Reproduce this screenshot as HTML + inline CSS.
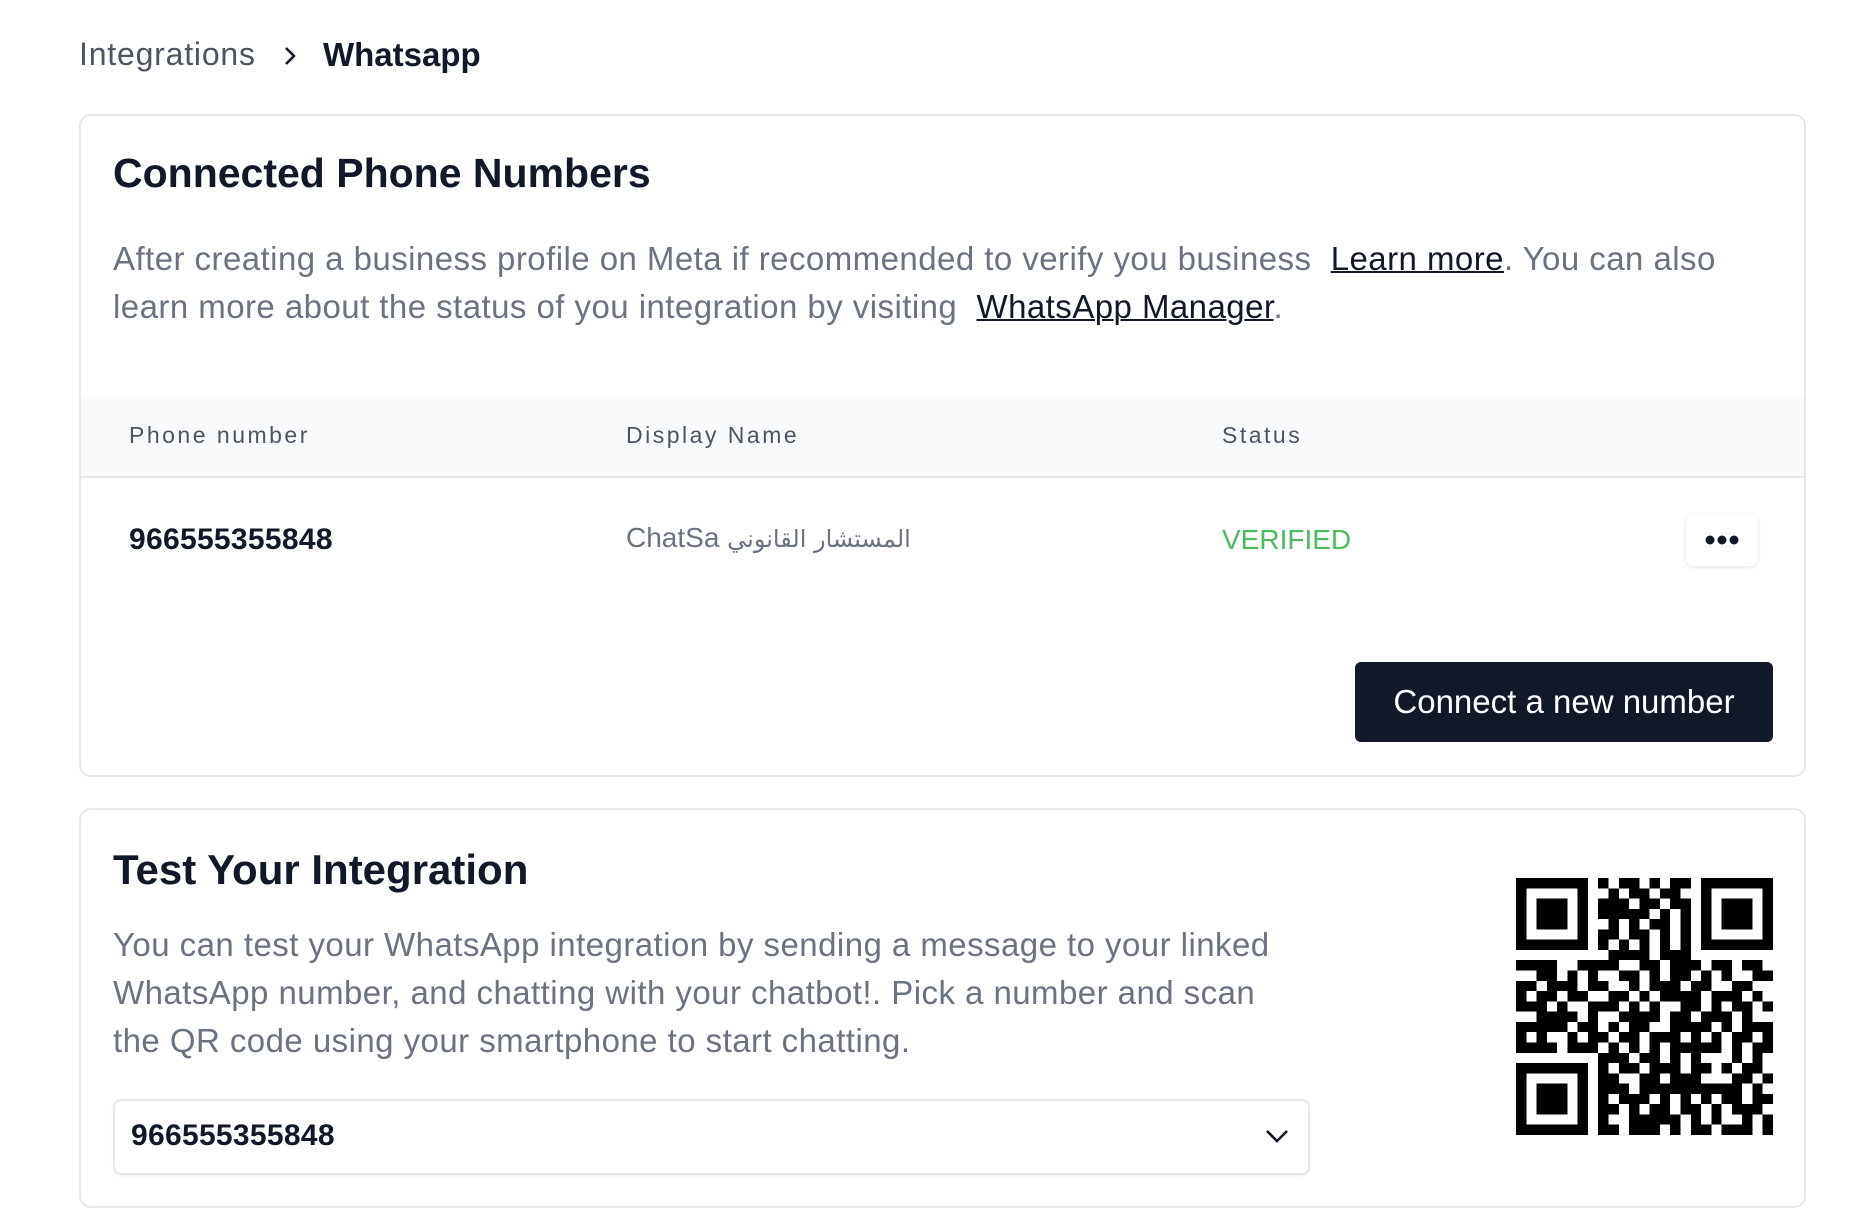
<!DOCTYPE html>
<html><head><meta charset="utf-8">
<style>
*{box-sizing:border-box;margin:0;padding:0}
body{width:1864px;height:1222px;background:#fff;font-family:"Liberation Sans","Noto Sans CJK SC",sans-serif;color:#111827;position:relative;overflow:hidden}
.abs{position:absolute;white-space:nowrap}
.card{position:absolute;left:79px;width:1727px;border:2px solid #e5e7eb;border-radius:12px;background:#fff}
.p{color:#6b7280;font-size:33px;line-height:48px;letter-spacing:0.45px}
.p a{color:#111827;text-decoration:underline;text-decoration-thickness:2px}
</style></head><body>
<div class="abs" style="left:79px;top:36px;font-size:32px;color:#4b5563;letter-spacing:0.8px">Integrations</div>
<svg class="abs" style="left:280px;top:44px" width="20" height="24" viewBox="0 0 20 24"><path d="M6 4 L14 12 L6 20" fill="none" stroke="#111827" stroke-width="2.6"/></svg>
<div class="abs" style="left:323px;top:36px;font-size:33px;font-weight:bold">Whatsapp</div>

<div class="card" style="top:114px;height:663px"></div>
<div class="abs" style="left:113px;top:150px;font-size:41px;font-weight:bold">Connected Phone Numbers</div>
<div class="abs p" style="left:113px;top:235px">After creating a business profile on Meta if recommended to verify you business &nbsp;<a>Learn more</a>. You can also<br>learn more about the status of you integration by visiting &nbsp;<a>WhatsApp Manager</a>.</div>
<div class="abs" style="left:81px;top:397px;width:1723px;height:81px;background:#f9fafb;border-bottom:2px solid #e5e7eb"></div>
<div class="abs" style="left:129px;top:422px;font-size:23px;color:#4b5563;letter-spacing:2.5px">Phone number</div>
<div class="abs" style="left:626px;top:422px;font-size:23px;color:#4b5563;letter-spacing:2.5px">Display Name</div>
<div class="abs" style="left:1222px;top:422px;font-size:23px;color:#4b5563;letter-spacing:2.5px">Status</div>
<div class="abs" style="left:129px;top:523px;font-size:30px;color:#111827;font-weight:bold;letter-spacing:0.3px">966555355848</div>
<div class="abs" style="left:626px;top:522px;font-size:28px;color:#6b7280">ChatSa <span style="font-family:'DejaVu Sans',sans-serif;font-size:24px">المستشار القانوني</span></div>
<div class="abs" style="left:1222px;top:524px;font-size:28px;color:#4cbb5c">VERIFIED</div>
<div class="abs" style="left:1686px;top:514px;width:72px;height:52px;border-radius:8px;background:#fff;box-shadow:0 1px 4px rgba(0,0,0,.12)">
<svg width="72" height="52"><circle cx="24" cy="26" r="4.5" fill="#111827"/><circle cx="36" cy="26" r="4.5" fill="#111827"/><circle cx="48" cy="26" r="4.5" fill="#111827"/></svg></div>
<div class="abs" style="left:1355px;top:662px;width:418px;height:80px;background:#111827;border-radius:6px;color:#fff;font-size:33px;line-height:80px;text-align:center">Connect a new number</div>

<div class="card" style="top:808px;height:400px"></div>
<div class="abs" style="left:113px;top:846px;font-size:42px;font-weight:bold">Test Your Integration</div>
<div class="abs p" style="left:113px;top:921px">You can test your WhatsApp integration by sending a message to your linked<br>WhatsApp number, and chatting with your chatbot!. Pick a number and scan<br>the QR code using your smartphone to start chatting.</div>
<div class="abs" style="left:113px;top:1099px;width:1197px;height:76px;border:2px solid #e5e7eb;border-radius:8px;box-shadow:0 1px 3px rgba(0,0,0,.06)"></div>
<div class="abs" style="left:131px;top:1119px;font-size:30px;color:#111827;font-weight:bold;letter-spacing:0.3px">966555355848</div>
<svg class="abs" style="left:1264px;top:1126px" width="26" height="20"><path d="M3 5 L13 15 L23 5" fill="none" stroke="#111827" stroke-width="2.6"/></svg>
<svg id="qr" class="abs" style="left:1516px;top:878px" width="257" height="257" viewBox="0 0 25 25" shape-rendering="crispEdges"></svg>
<script>
var rows=[
"1111111010110101101111111",
"1000001001011011001000001",
"1011101011101101101011101",
"1011101011111010101011101",
"1011101001010110101011101",
"1000001011011010101000001",
"1111111010101010101111111",
"0000000001111011100000000",
"1111001111001101110110110",
"0011010100110101101010011",
"1101110110010111011001100",
"1011011001101011110111010",
"1110100111010100110101101",
"0011110100111101101110100",
"1111101101011001111010111",
"1010010110110111010101101",
"1111011101010101111101011",
"0000000011101101010001010",
"1111111010110111011010110",
"1000001011001101110001101",
"1011101011101111111111010",
"1011101010111010101011011",
"1011101011010110110101110",
"1000001010011111010100101",
"1111111011011101011011101"];
var s="";
for(var y=0;y<25;y++)for(var x=0;x<25;x++)if(rows[y][x]=="1")s+="M"+x+" "+y+"h1v1h-1z";
document.getElementById("qr").innerHTML='<path d="'+s+'" fill="#000"/>';
</script>
</body></html>
